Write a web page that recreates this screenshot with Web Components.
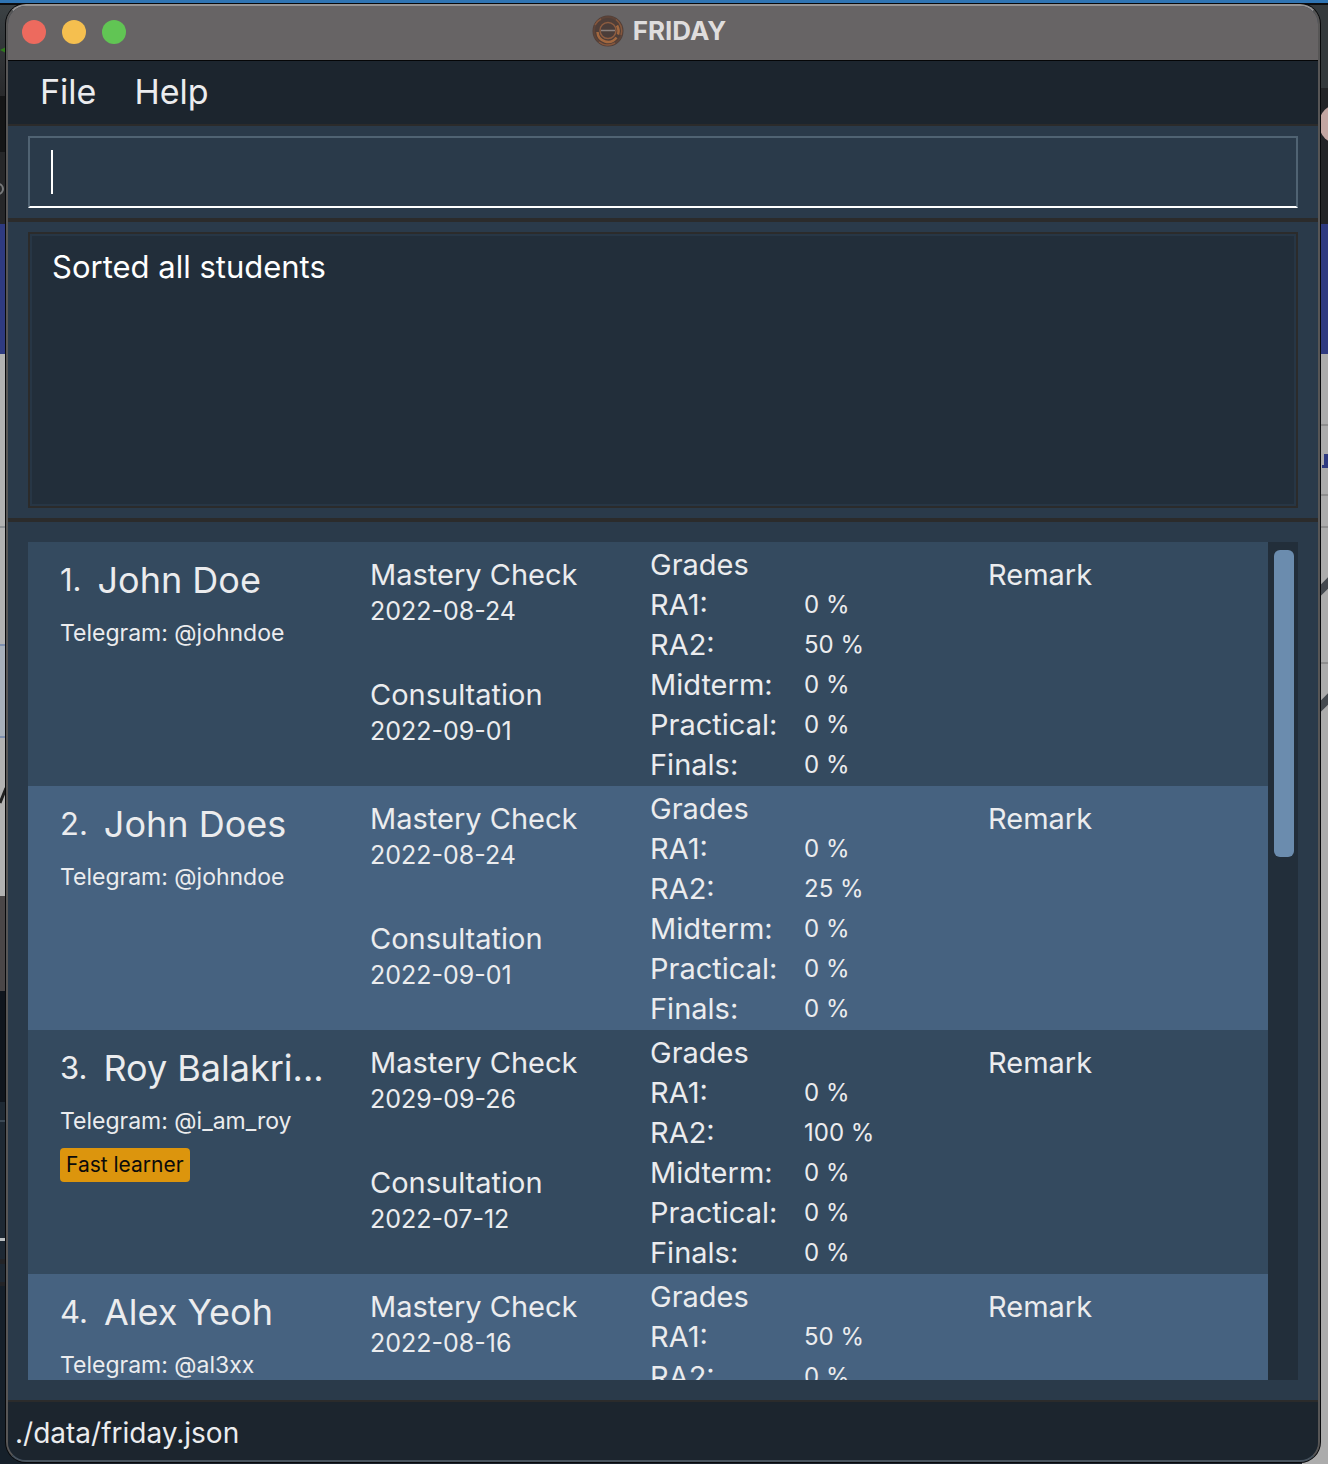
<!DOCTYPE html>
<html lang="en">
<head>
<meta charset="utf-8">
<title>FRIDAY</title>
<style>
  html, body { margin: 0; }
  body { font-family: Inter, "Liberation Sans", sans-serif; color: #ebecee; background: #1c252e; }
</style>
</head>
<body>
<friday-desktop>
  <app-window heading="FRIDAY">
    <menu-bar><menu-item>File</menu-item><menu-item>Help</menu-item></menu-bar>
    <command-box></command-box>
    <result-display>Sorted all students</result-display>
    <student-list>
      <student-card number="1" name="John Doe" telegram="@johndoe" mastery="2022-08-24" consultation="2022-09-01" grades="0,50,0,0,0"></student-card>
      <student-card number="2" name="John Does" telegram="@johndoe" mastery="2022-08-24" consultation="2022-09-01" grades="0,25,0,0,0"></student-card>
      <student-card number="3" name="Roy Balakri..." telegram="@i_am_roy" mastery="2029-09-26" consultation="2022-07-12" grades="0,100,0,0,0"><tag-label>Fast learner</tag-label></student-card>
      <student-card number="4" name="Alex Yeoh" telegram="@al3xx" mastery="2022-08-16" grades="50,0"></student-card>
    </student-list>
    <status-bar>./data/friday.json</status-bar>
  </app-window>
</friday-desktop>

<script>
const define = (name, html, setup) => customElements.define(name, class extends HTMLElement {
  constructor() {
    super();
    this.attachShadow({ mode: 'open' });
  }
  connectedCallback() {
    this.shadowRoot.innerHTML = html;
    if (setup) setup(this, this.shadowRoot);
  }
});

/* Other windows show in narrow strips on both sides of the app window. */
define('friday-desktop', `
<style>
  :host { display: flex; position: relative; box-sizing: border-box; height: 100vh; min-height: 900px; padding: 4px 8px 2px 6px; overflow: hidden;
    background: linear-gradient(#2f74b3 0 3px, #0c0d10 3px 5px, #1a222c 5px); }
  svg { position: absolute; top: 0; }
  .left { left: 0; }
  .right { right: 0; }
  ::slotted(*) { flex: 1; position: relative; min-width: 0; }
</style>
<svg class="left" width="26" height="1464" aria-hidden="true">
  <defs><linearGradient id="a" x1="0" y1="0" x2="0" y2="1"><stop offset="0" stop-color="#3b4144"/><stop offset="1" stop-color="#292a2c"/></linearGradient></defs>
  <path fill="url(#a)" d="M0 5h26v91H0z"/>
  <path fill="#151617" d="M0 96h26v56H0z"/>
  <path fill="#262729" d="M0 152h26v72H0z"/>
  <path fill="#2f7a1c" d="M0 50l6-3v6z"/>
  <circle cx="-2" cy="189" r="5" fill="none" stroke="#77797b" stroke-width="2"/>
  <path fill="#2e3a80" d="M0 224h26v130H0z"/>
  <path fill="#b2b2b2" d="M0 354h26v542H0z"/>
  <path fill="#a7b0bb" d="M0 645h26v92H0z"/>
  <path stroke="#8f9296" stroke-width="2" d="M0 527h26"/>
  <path stroke="#7e8fae" stroke-width="2" d="M0 645h26M0 737h26"/>
  <path stroke="#202020" stroke-width="3" fill="none" d="M0 803l6-15"/>
  <path fill="#4a4647" d="M0 896h26v95H0z"/>
  <path fill="#10161e" d="M0 991h26v111H0z"/>
  <path fill="#1e2934" d="M0 1102h26v362H0z"/>
  <path fill="#3c4955" d="M0 1120h26v2H0z"/>
  <path fill="#bcc0c2" d="M0 1238h26v3H0z"/>
  <path fill="#232427" d="M0 1259h26v5H0zM0 1282h26v4H0z"/>
  <path fill="#16202a" d="M0 1286h26v178H0z"/>
</svg>
<svg class="right" width="26" height="1464" aria-hidden="true">
  <path fill="#34393c" d="M0 5h26v83H0z"/>
  <path fill="#232427" d="M0 88h26v136H0z"/>
  <circle cx="37" cy="124" r="20" fill="#c3a6a2"/>
  <path fill="#2e3a80" d="M0 224h26v130H0z"/>
  <path fill="#acacac" d="M0 354h26v1110H0z"/>
  <path stroke="#8f8f8f" stroke-width="2" d="M0 425h26M0 495h26M0 527h26M0 663h26"/>
  <path stroke="#44494f" stroke-width="8" d="M14 595l16-16M14 711l16-16"/>
  <path fill="#2e3a80" d="M22 454h4v14h-6v-3h2z"/>
</svg>
<slot></slot>`);

define('app-window', `
<style>
  :host { display: flex; flex-direction: column; box-sizing: border-box; overflow: hidden; border: 2px solid #575656; border-top-color: #969494; border-bottom-color: #47525d; border-radius: 20px; background: #2a3a4a; box-shadow: 0 0 0 1px #08090b; }
  header { display: flex; align-items: center; height: 52px; background: #676465; border-bottom: 1px solid #050607; padding: 0 14px 2px; }
  .lights { flex: 1; display: flex; gap: 16px; }
  .lights button { width: 24px; height: 24px; border: 0; border-radius: 50%; padding: 0; }
  .close { background: #ed6a5e; }
  .min { background: #f5bf4f; }
  .max { background: #61c554; }
  h1 { margin: 0; padding: 0 8px 2px 0; display: flex; align-items: center; gap: 9px; font-size: 26px; line-height: 32px; font-weight: 700; color: #dfdddd; }
  .end { flex: 1; }
</style>
<header>
  <div class="lights"><button class="close" aria-label="Close"></button><button class="min" aria-label="Minimize"></button><button class="max" aria-label="Zoom"></button></div>
  <h1>
    <svg width="32" height="32" viewBox="0 0 32 32" fill="none" aria-hidden="true">
      <circle cx="16" cy="16" r="15.5" fill="#4f3e38"/>
      <circle cx="16" cy="16" r="14" stroke="#5c4338" stroke-width="2"/>
      <path d="M3 10A14 14 0 0 1 9 4M24 4.500A14 14 0 0 1 29 20M7 27A14 14 0 0 0 23 28" stroke="#85573d" stroke-width="1.500"/>
      <path d="M5.500 17a10.500 10.500 0 0 0 19 5.500M25 10.500a11 11 0 0 1 1 9" stroke="#a3683f" stroke-width="2.500"/>
      <circle cx="16" cy="15.500" r="8" fill="#4b3d39" stroke="#8d5c40" stroke-width="1.500"/>
      <path d="M9 15.500h14" stroke="#8d827e" stroke-width="1.500"/>
    </svg>
    <span></span>
  </h1>
  <div class="end"></div>
</header>
<slot></slot>`, (el, root) => { root.querySelector('span').textContent = el.getAttribute('heading'); });

define('menu-bar', `
<style>
  :host { display: flex; box-sizing: border-box; height: 65px; align-items: center; gap: 38px; padding: 0 32px 2px; background: #1c252e; border-bottom: 2px solid #2b2b2b; }
</style><slot></slot>`);

define('menu-item', `
<style>
  :host { display: block; }
  button { border: 0; background: none; padding: 0; color: inherit; font: inherit; font-size: 34px; line-height: 48px; }
</style><button><slot></slot></button>`);

define('command-box', `
<style>
  :host { display: block; padding: 10px 20px; border-bottom: 4px solid #2b2b2b; }
  input { display: block; box-sizing: border-box; width: 100%; height: 72px; margin: 0; padding: 0 21px; border: 2px solid #506373; border-bottom-color: #fff; border-radius: 0; outline: 0; color: #fff; font: inherit; font-size: 31px; caret-color: transparent;
    background: linear-gradient(#fff, #fff) 21px center / 2px 44px no-repeat; }
</style><input type="text" aria-label="Command">`);

define('result-display', `
<style>
  :host { display: block; padding: 10px 20px; border-bottom: 4px solid #2b2b2b; }
  textarea { display: block; box-sizing: border-box; width: 100%; height: 276px; margin: 0; padding: 13px 22px; border: 2px solid #2b2b2b; border-radius: 0; outline: 0; resize: none; background: #222e3a; box-shadow: inset 0 0 0 2px #273645; color: #fff; font: inherit; font-size: 31px; line-height: 40px; }
</style><textarea readonly aria-label="Result"></textarea>`, (el, root) => { root.querySelector('textarea').value = el.textContent.trim(); });

define('student-list', `
<style>
  :host { flex: 1; min-height: 0; display: flex; padding: 20px; }
  .rows { flex: 1; min-width: 0; overflow: hidden; }
  .track { width: 20px; padding: 8px 4px 8px 6px; background: #222e3a; }
  .thumb { height: 307px; border-radius: 6px; background: #6b8cae; }
  ::slotted(:nth-child(odd)) { background: #344a5f; }
  ::slotted(:nth-child(even)) { background: #466280; }
</style>
<div class="rows"><slot></slot></div><div class="track"><div class="thumb"></div></div>`);

define('student-card', `
<style>
  :host { display: grid; align-items: start; box-sizing: border-box; height: 244px; grid-template-columns: 310fr 280fr 338fr 280fr; padding-left: 32px; }
  section { min-width: 0; padding-top: 13px; }
  .who { display: flex; align-items: center; gap: 16px; height: 50px; white-space: nowrap; }
  .num { font-size: 31px; line-height: 48px; }
  h2 { margin: 0; font-size: 36px; line-height: 48px; font-weight: 400; }
  p { margin: 0; }
  .telegram { margin: 12px 0 11px; font-size: 23px; line-height: 32px; }
  h3, caption, th { margin: 0; padding: 0; font-size: 29px; line-height: 40px; font-weight: 400; text-align: left; white-space: nowrap; }
  .date { margin-bottom: 48px; font-size: 25px; line-height: 32px; }
  table { border-collapse: collapse; margin-top: 3px; }
  th { width: 154px; height: 40px; vertical-align: middle; }
  td { padding: 0; font-size: 24px; line-height: 32px; white-space: nowrap; vertical-align: middle; }
</style>
<section>
  <div class="who"><span class="num"></span><h2></h2></div>
  <p class="telegram"></p>
  <slot></slot>
</section>
<section class="tasks"></section>
<table><caption>Grades</caption><tbody></tbody></table>
<section><h3>Remark</h3></section>`, (el, root) => {
  const get = n => el.getAttribute(n);
  root.querySelector('.num').textContent = get('number') + '.';
  root.querySelector('h2').textContent = get('name');
  root.querySelector('.telegram').textContent = 'Telegram: ' + get('telegram');
  root.querySelector('.tasks').innerHTML = [['Mastery Check', get('mastery')], ['Consultation', get('consultation')]]
    .filter(t => t[1]).map(t => `<h3>${t[0]}</h3><p class="date">${t[1]}</p>`).join('');
  const labels = ['RA1:', 'RA2:', 'Midterm:', 'Practical:', 'Finals:'];
  root.querySelector('tbody').innerHTML = get('grades').split(',')
    .map((g, i) => `<tr><th scope="row">${labels[i]}</th><td>${g} %</td></tr>`).join('');
});

define('tag-label', `
<style>
  :host { display: inline-block; padding: 0 6px; border-radius: 4px; background: #dc950d; color: #0b0b0b; font-size: 21px; line-height: 34px; white-space: nowrap; }
</style><slot></slot>`);

define('status-bar', `
<style>
  :host { display: block; padding: 11px 7px 7px; border-top: 2px solid #2b2b2b; background: #1c252e; font-size: 28px; line-height: 40px; }
</style><slot></slot>`);
</script>
</body>
</html>
